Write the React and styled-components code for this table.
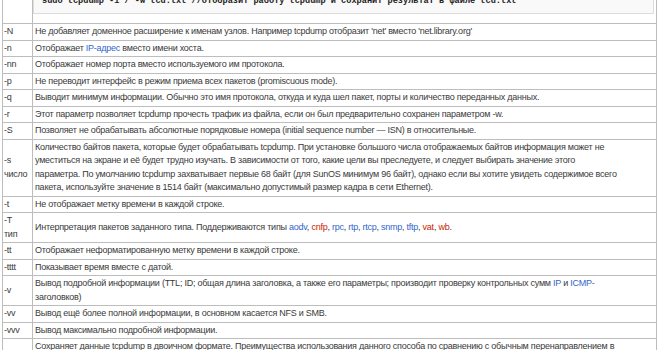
import styled, { createGlobalStyle } from "styled-components";

const GlobalStyle = createGlobalStyle`
  html, body {
    margin: 0;
    padding: 0;
    background: #fff;
  }
  body {
    font-family: "Liberation Sans", Arial, sans-serif;
    color: #3a3a3a;
    overflow: hidden;
  }
`;

const Page = styled.div`
  width: 660px;
  height: 350px;
  overflow: hidden;
  padding-left: 2px;
  box-sizing: border-box;
`;

const Table = styled.table`
  margin-top: -11px;
  width: 655px;
  border-collapse: collapse;
  font-size: 9px;
  letter-spacing: -0.25px;
  line-height: 13.5px;
  table-layout: fixed;
`;

const Row = styled.tr``;

const Key = styled.td`
  width: 28px;
  border: 1px solid #bdbdbd;
  padding: 1px 0 1px 1px;
  vertical-align: middle;
  white-space: nowrap;
`;

const Desc = styled.td`
  border: 1px solid #bdbdbd;
  padding: 1px 2px;
  vertical-align: middle;
`;

const Code = styled.pre`
  margin: 0 0 8px -2px;
  padding: 3px 8px 6px;
  background: #f9f9f9;
  border: 1px solid #dcdcdc;
  font-family: "Liberation Mono", "Courier New", monospace;
  font-size: 8.6px;
  font-weight: bold;
  letter-spacing: 0;
  line-height: 12px;
  color: #222;
  white-space: pre;
  overflow: hidden;
`;

const Link = styled.a`
  color: ${(p) => (p.$missing ? "#cc2200" : "#3366cc")};
  text-decoration: none;
`;

const rows = [
  ["-N", "Не добавляет доменное расширение к именам узлов. Например tcpdump отобразит 'net' вместо 'net.library.org'"],
  ["-n", <>Отображает <Link href="#">IP-адрес</Link> вместо имени хоста.</>],
  ["-nn", "Отображает номер порта вместо используемого им протокола."],
  ["-p", "Не переводит интерфейс в режим приема всех пакетов (promiscuous mode)."],
  ["-q", "Выводит минимум информации. Обычно это имя протокола, откуда и куда шел пакет, порты и количество переданных данных."],
  ["-r", "Этот параметр позволяет tcpdump прочесть трафик из файла, если он был предварительно сохранен параметром -w."],
  ["-S", "Позволяет не обрабатывать абсолютные порядковые номера (initial sequence number — ISN) в относительные."],
  [
    <>-s<br />число</>,
    <>
      Количество байтов пакета, которые будет обрабатывать tcpdump. При установке большого числа отображаемых байтов информация может не
      <br />
      уместиться на экране и её будет трудно изучать. В зависимости от того, какие цели вы преследуете, и следует выбирать значение этого
      <br />
      параметра. По умолчанию tcpdump захватывает первые 68 байт (для SunOS минимум 96 байт), однако если вы хотите увидеть содержимое всего
      <br />
      пакета, используйте значение в 1514 байт (максимально допустимый размер кадра в сети Ethernet).
    </>,
  ],
  ["-t", "Не отображает метку времени в каждой строке."],
  [
    <>-T<br />тип</>,
    <>
      Интерпретация пакетов заданного типа. Поддерживаются типы <Link href="#">aodv</Link>,{" "}
      <Link href="#" $missing>cnfp</Link>, <Link href="#">rpc</Link>, <Link href="#">rtp</Link>,{" "}
      <Link href="#">rtcp</Link>, <Link href="#">snmp</Link>, <Link href="#">tftp</Link>,{" "}
      <Link href="#" $missing>vat</Link>, <Link href="#" $missing>wb</Link>.
    </>,
  ],
  ["-tt", "Отображает неформатированную метку времени в каждой строке."],
  ["-tttt", "Показывает время вместе с датой."],
  [
    "-v",
    <>
      Вывод подробной информации (TTL; ID; общая длина заголовка, а также его параметры; производит проверку контрольных сумм{" "}
      <Link href="#">IP</Link> и <Link href="#">ICMP-</Link>
      <br />
      заголовков)
    </>,
  ],
  ["-vv", "Вывод ещё более полной информации, в основном касается NFS и SMB."],
  ["-vvv", "Вывод максимально подробной информации."],
  [
    "-w",
    <>
      Сохраняет данные tcpdump в двоичном формате. Преимущества использования данного способа по сравнению с обычным перенаправлением в
      <br />
      файл в том, что такой файл можно позже прочитать с помощью tcpdump или другой программы-анализатора.
    </>,
  ],
];

export default function App() {
  return (
    <Page>
      <GlobalStyle />
      <Table>
        <tbody>
          <Row>
            <Key />
            <Desc>
              <Code>sudo tcpdump -i / -w tcd.txt //отобразит работу tcpdump и сохранит результат в файле tcd.txt</Code>
            </Desc>
          </Row>
          {rows.map(([key, text], i) => (
            <Row key={i}>
              <Key>{key}</Key>
              <Desc>{text}</Desc>
            </Row>
          ))}
        </tbody>
      </Table>
    </Page>
  );
}
